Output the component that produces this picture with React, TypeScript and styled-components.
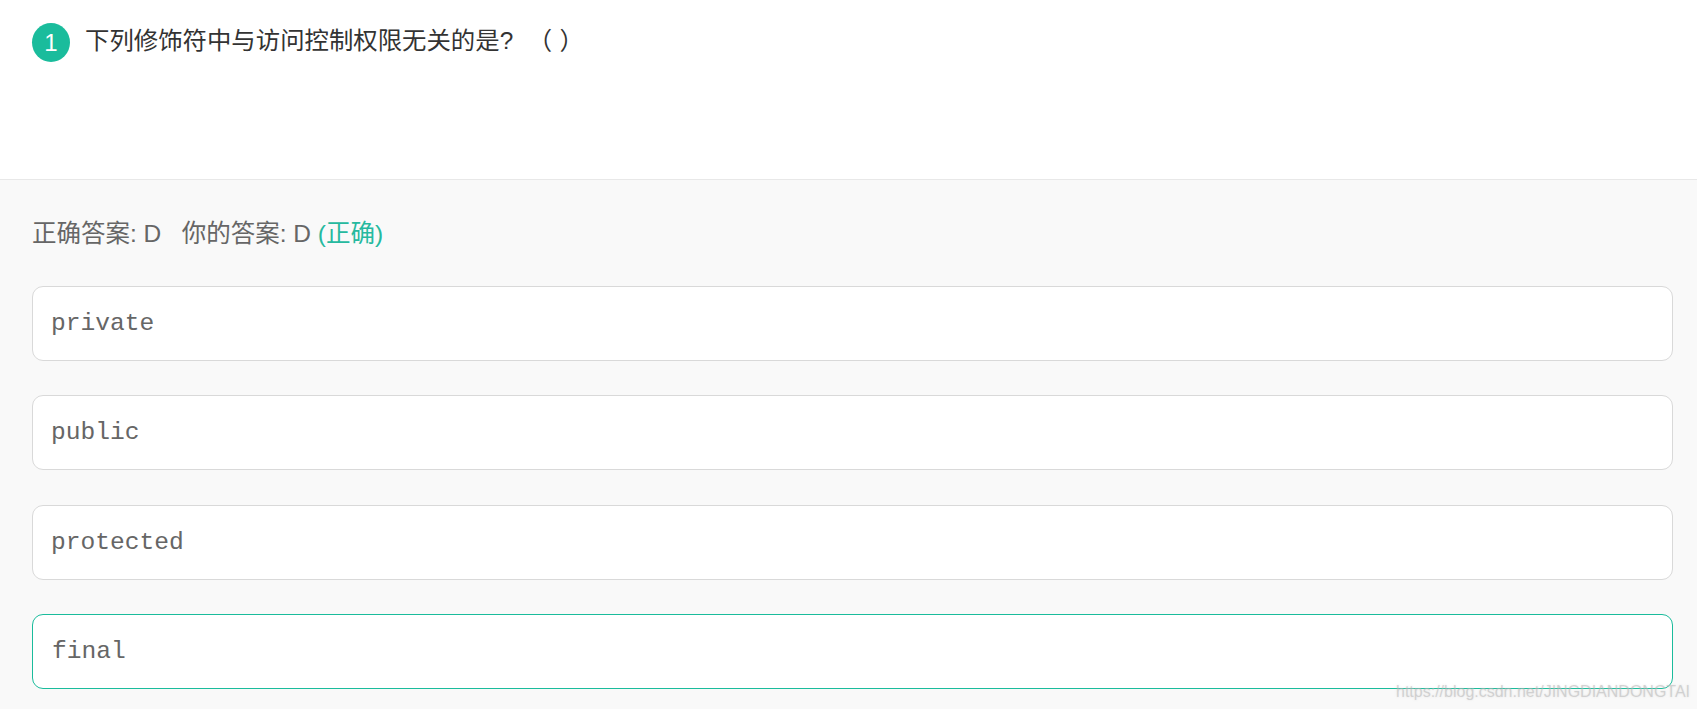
import React from "react";
import styled, { createGlobalStyle } from "styled-components";

const Global = createGlobalStyle`
  html, body { margin: 0; padding: 0; background: #f9f9f9; }
  body { font-family: "Liberation Sans", "Noto Sans CJK SC", sans-serif; }
`;

const Page = styled.div`
  position: relative;
  width: 1697px;
  height: 709px;
  overflow: hidden;
  background: #f9f9f9;
`;

const Question = styled.header`
  box-sizing: border-box;
  height: 180px;
  padding: 23px 0 0 32px;
  display: flex;
  align-items: flex-start;
  gap: 15px;
  background: #fff;
  border-bottom: 1px solid #e8e8e8;
`;

const Badge = styled.span`
  flex: none;
  width: 38px;
  height: 39px;
  border-radius: 50%;
  background: #1abc9c;
  color: #fff;
  font-size: 24px;
  line-height: 39px;
  text-align: center;
`;

const Title = styled.h1`
  margin: 0;
  font-size: 24.4px;
  font-weight: 400;
  line-height: 35px;
  color: #333;
  white-space: pre;
  word-spacing: 0.5px;
`;

const Analysis = styled.section`
  padding: 37px 24px 0 32px;
`;

const Result = styled.p`
  margin: 0 0 35px;
  font-size: 24.5px;
  line-height: 34px;
  color: #666;
  white-space: pre;
`;

const Correct = styled.span`
  color: #26b99f;
`;

const Options = styled.div`
  display: flex;
  flex-direction: column;
  gap: 34.4px;
`;

const Option = styled.div<{ $selected?: boolean }>`
  box-sizing: border-box;
  height: 75px;
  padding: 0 17px 0 ${(p) => (p.$selected ? 19 : 18)}px;
  display: flex;
  align-items: center;
  background: #fff;
  border: 1px solid ${(p) => (p.$selected ? "#1abc9c" : "#d9d9d9")};
  border-radius: 11px;
  font-family: "Liberation Mono", monospace;
  font-size: 24.6px;
  color: #666;
`;

const Watermark = styled.span`
  position: absolute;
  left: 1396px;
  top: 682px;
  font-size: 16px;
  line-height: 20px;
  white-space: nowrap;
  color: rgba(175, 175, 175, 0.45);
  text-shadow: 0 0 2px rgba(205, 205, 205, 0.5);
`;

const options = ["private", "public", "protected", "final"];

export default function App() {
  return (
    <Page>
      <Global />
      <Question>
        <Badge>1</Badge>
        <Title>下列修饰符中与访问控制权限无关的是?  （ ）</Title>
      </Question>
      <Analysis>
        <Result>
          正确答案: D   你的答案: D <Correct>(正确)</Correct>
        </Result>
        <Options>
          {options.map((o) => (
            <Option key={o} $selected={o === "final"}>
              {o}
            </Option>
          ))}
        </Options>
      </Analysis>
      <Watermark>https://blog.csdn.net/JINGDIANDONGTAI</Watermark>
    </Page>
  );
}
